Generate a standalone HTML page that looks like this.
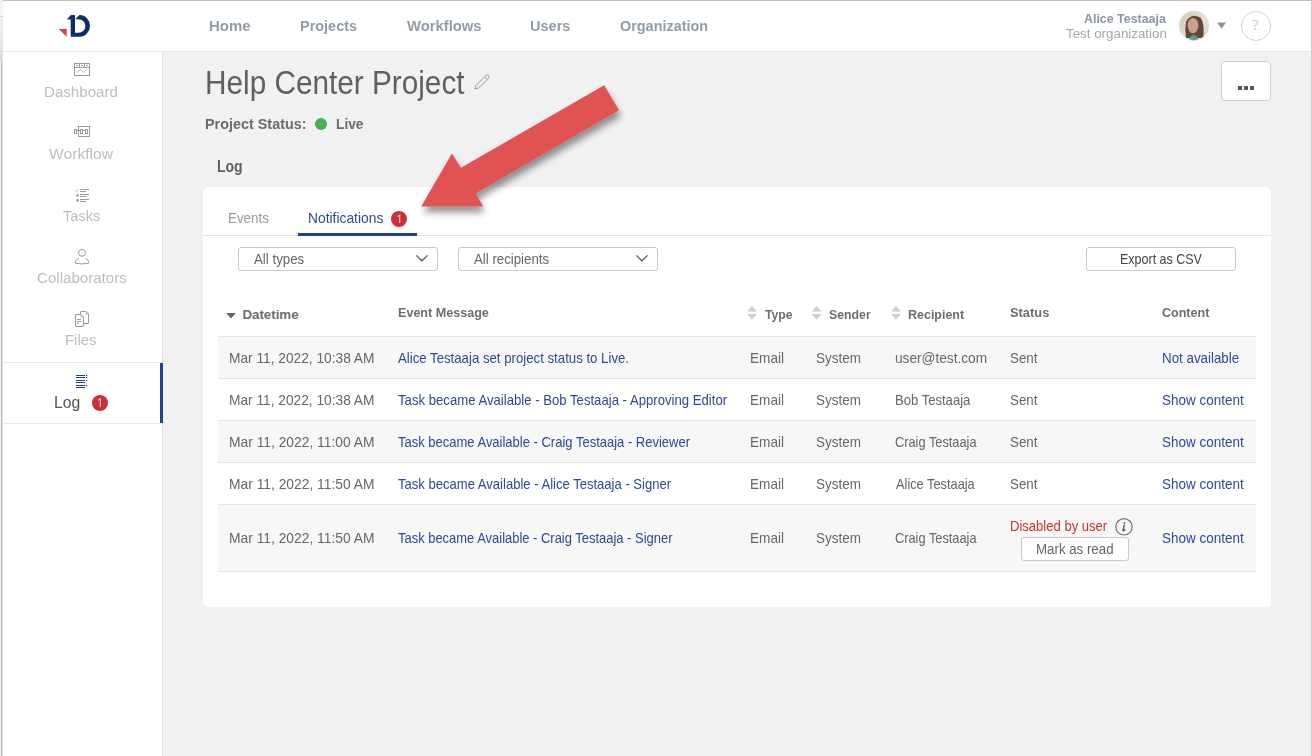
<!DOCTYPE html>
<html><head><meta charset="utf-8"><title>Help Center Project - Log</title>
<style>
html,body{margin:0;padding:0;}
body{width:1312px;height:756px;overflow:hidden;position:relative;background:#f1f1f1;font-family:"Liberation Sans",sans-serif;}
.t{position:absolute;white-space:nowrap;line-height:1;transform-origin:0 0;}
.b{position:absolute;box-sizing:border-box;}
svg{position:absolute;overflow:visible;}
</style></head><body>
<!-- left window strip -->
<div class="b" style="left:0;top:0;width:3px;height:756px;background:#f4f3f1;"></div>
<div class="b" style="left:0;top:16px;width:3px;height:1px;background:#cfcfcf;"></div>
<div class="b" style="left:0;top:17px;width:3px;height:45px;background:linear-gradient(#f2f2f1,#dcdcdc);"></div>
<div class="b" style="left:1px;top:62px;width:1px;height:694px;background:#bdbdbd;"></div>
<div class="b" style="left:2px;top:62px;width:1px;height:694px;background:#dedede;"></div>
<!-- header -->
<div class="b" style="left:3px;top:0;width:1309px;height:52px;background:#fff;border-bottom:1px solid #e8e8e8;"></div>
<div class="b" style="left:3px;top:0;width:1309px;height:1px;background:#c6beb8;"></div>
<!-- right window edge -->
<div class="b" style="left:1311px;top:0;width:1px;height:756px;background:#cfcfcf;"></div>
<!-- sidebar -->
<div class="b" style="left:3px;top:52px;width:160px;height:704px;background:#fff;border-right:1px solid #e3e3e3;"></div>
<div class="b" style="left:3px;top:362px;width:159px;height:1px;background:#e8e8e8;"></div>
<div class="b" style="left:3px;top:423px;width:159px;height:1px;background:#e8e8e8;"></div>
<div class="b" style="left:160px;top:363px;width:3px;height:60px;background:#26408f;"></div>
<!-- card -->
<div class="b" style="left:203px;top:187px;width:1068px;height:420px;background:#fff;border-radius:5px;"></div>
<div class="b" style="left:203px;top:235px;width:1068px;height:1px;background:#e3e3e3;"></div>
<div class="b" style="left:298px;top:233px;width:119px;height:3px;background:#26408f;"></div>
<!-- filters -->
<div class="b" style="left:238px;top:247px;width:200px;height:24px;border:1px solid #c9c9c9;border-radius:3px;background:#fff;"></div>
<div class="b" style="left:458px;top:247px;width:200px;height:24px;border:1px solid #c9c9c9;border-radius:3px;background:#fff;"></div>
<div class="b" style="left:1086px;top:247px;width:150px;height:24px;border:1px solid #c9c9c9;border-radius:3px;background:#fff;"></div>
<!-- table rows -->
<div class="b" style="left:218px;top:336px;width:1038px;height:1px;background:#e3e3e3;"></div>
<div class="b" style="left:218px;top:337px;width:1038px;height:41px;background:#f7f7f7;"></div>
<div class="b" style="left:218px;top:378px;width:1038px;height:1px;background:#e3e3e3;"></div>
<div class="b" style="left:218px;top:420px;width:1038px;height:1px;background:#e3e3e3;"></div>
<div class="b" style="left:218px;top:421px;width:1038px;height:41px;background:#f7f7f7;"></div>
<div class="b" style="left:218px;top:462px;width:1038px;height:1px;background:#e3e3e3;"></div>
<div class="b" style="left:218px;top:504px;width:1038px;height:1px;background:#e3e3e3;"></div>
<div class="b" style="left:218px;top:505px;width:1038px;height:66px;background:#f7f7f7;"></div>
<div class="b" style="left:218px;top:571px;width:1038px;height:1px;background:#e3e3e3;"></div>
<!-- ... button -->
<div class="b" style="left:1221px;top:61px;width:50px;height:40px;border:1px solid #cfcfcf;border-radius:4px;background:#fff;"></div>
<div class="b" style="left:1238px;top:86px;width:4px;height:4px;background:#555;"></div>
<div class="b" style="left:1244px;top:86px;width:4px;height:4px;background:#555;"></div>
<div class="b" style="left:1250px;top:86px;width:4px;height:4px;background:#555;"></div>
<!-- Mark as read button -->
<div class="b" style="left:1021px;top:537px;width:108px;height:24px;border:1px solid #c9c9c9;border-radius:3px;background:#fff;"></div>
<!-- badges -->
<div class="b" style="left:92px;top:395px;width:16px;height:16px;border-radius:50%;background:#c9303a;"></div>
<div class="b" style="left:391px;top:211px;width:16px;height:16px;border-radius:50%;background:#c9303a;"></div>
<!-- green dot -->
<div class="b" style="left:315px;top:117.5px;width:12px;height:12px;border-radius:50%;background:#47b04f;"></div>
<!-- help circle -->
<div class="b" style="left:1241px;top:11px;width:30px;height:30px;border-radius:50%;border:1px solid #d0d0d0;"></div>
<!-- avatar -->
<svg width="1312" height="756" viewBox="0 0 1312 756" style="left:0;top:0;">
<defs><filter id="avb"><feGaussianBlur stdDeviation="0.6"/></filter><clipPath id="avc"><circle cx="1194" cy="25.8" r="14.6"/></clipPath>
<linearGradient id="avbg" x1="0" y1="0" x2="1" y2="1"><stop offset="0" stop-color="#cfc6b6"/><stop offset="0.6" stop-color="#e6e0d4"/><stop offset="1" stop-color="#d6cebf"/></linearGradient></defs>
<g clip-path="url(#avc)">
<rect x="1179" y="11" width="30" height="30" fill="url(#avbg)"/>
<g filter="url(#avb)">
<path d="M1186,38 Q1184.5,30 1186,22 Q1189,16 1194.5,15.8 Q1200.5,16 1202.5,21.5 Q1204.5,29 1203,38 Z" fill="#604638"/>
<ellipse cx="1193" cy="25.6" rx="5.4" ry="7.6" fill="#c9a08b"/>
<path d="M1188.5,41 Q1189.5,35.5 1193.5,35 Q1197.5,35.5 1198.5,41 Z" fill="#5d9a8b"/>
</g>
</g>
<circle cx="1194" cy="25.8" r="14.8" fill="none" stroke="#d8d8d8" stroke-width="0.8"/>
</svg>
<div class="t" style="left:208.93px;top:18.00px;font-size:15.5px;font-weight:700;color:#929ca6;transform:scaleX(0.9647);">Home</div>
<div class="t" style="left:299.86px;top:18.00px;font-size:15.5px;font-weight:700;color:#929ca6;transform:scaleX(0.9325);">Projects</div>
<div class="t" style="left:407.00px;top:18.00px;font-size:15.5px;font-weight:700;color:#929ca6;transform:scaleX(0.9545);">Workflows</div>
<div class="t" style="left:529.93px;top:18.00px;font-size:15.5px;font-weight:700;color:#929ca6;transform:scaleX(0.9364);">Users</div>
<div class="t" style="left:619.92px;top:18.00px;font-size:15.5px;font-weight:700;color:#929ca6;transform:scaleX(0.9296);">Organization</div>
<div class="t" style="left:1084.49px;top:13.00px;font-size:12.2px;font-weight:700;color:#8b96a2;transform:scaleX(1.0177);">Alice Testaaja</div>
<div class="t" style="left:1066.43px;top:27.00px;font-size:13.4px;font-weight:400;color:#9ea7b0;transform:scaleX(0.9964);">Test organization</div>
<div class="t" style="left:44.44px;top:84.00px;font-size:15.5px;font-weight:400;color:#bdbdbd;transform:scaleX(0.9749);">Dashboard</div>
<div class="t" style="left:49.42px;top:146.00px;font-size:15.5px;font-weight:400;color:#bdbdbd;transform:scaleX(1.0095);">Workflow</div>
<div class="t" style="left:63.01px;top:208.00px;font-size:15.5px;font-weight:400;color:#bdbdbd;transform:scaleX(0.9394);">Tasks</div>
<div class="t" style="left:36.50px;top:270.00px;font-size:15.5px;font-weight:400;color:#bdbdbd;transform:scaleX(0.9735);">Collaborators</div>
<div class="t" style="left:65.46px;top:332.00px;font-size:15.5px;font-weight:400;color:#bdbdbd;transform:scaleX(0.9605);">Files</div>
<div class="t" style="left:53.74px;top:395.00px;font-size:15.7px;font-weight:400;color:#555;transform:scaleX(1.0057);">Log</div>
<div class="t" style="left:205.32px;top:67.00px;font-size:32.3px;font-weight:400;color:#606060;transform:scaleX(0.9209);">Help Center Project</div>
<div class="t" style="left:205.46px;top:116.00px;font-size:15.5px;font-weight:700;color:#6c6c6c;transform:scaleX(0.9282);">Project Status:</div>
<div class="t" style="left:335.81px;top:116.00px;font-size:15.5px;font-weight:700;color:#6c6c6c;transform:scaleX(0.8862);">Live</div>
<div class="t" style="left:217.49px;top:159.00px;font-size:16px;font-weight:700;color:#5e5e5e;transform:scaleX(0.8750);">Log</div>
<div class="t" style="left:228.13px;top:210.00px;font-size:15px;font-weight:400;color:#999;transform:scaleX(0.8912);">Events</div>
<div class="t" style="left:307.69px;top:210.00px;font-size:15px;font-weight:400;color:#2f4899;transform:scaleX(0.9218);">Notifications</div>
<div class="t" style="left:254.30px;top:252.00px;font-size:14.5px;font-weight:400;color:#666;transform:scaleX(0.9171);">All types</div>
<div class="t" style="left:474.30px;top:252.00px;font-size:14.5px;font-weight:400;color:#666;transform:scaleX(0.9130);">All recipients</div>
<div class="t" style="left:1119.50px;top:251.00px;font-size:15px;font-weight:400;color:#444;transform:scaleX(0.8326);">Export as CSV</div>
<div class="t" style="left:242.43px;top:308.00px;font-size:13.3px;font-weight:700;color:#6e6e6e;">Datetime</div>
<div class="t" style="left:397.68px;top:306.00px;font-size:13.3px;font-weight:700;color:#6e6e6e;transform:scaleX(0.9455);">Event Message</div>
<div class="t" style="left:764.68px;top:308.00px;font-size:13.3px;font-weight:700;color:#6e6e6e;transform:scaleX(0.9199);">Type</div>
<div class="t" style="left:829.23px;top:308.00px;font-size:13.3px;font-weight:700;color:#6e6e6e;transform:scaleX(0.9261);">Sender</div>
<div class="t" style="left:907.99px;top:308.00px;font-size:13.3px;font-weight:700;color:#6e6e6e;transform:scaleX(0.9379);">Recipient</div>
<div class="t" style="left:1010.21px;top:306.00px;font-size:13.3px;font-weight:700;color:#6e6e6e;transform:scaleX(0.9672);">Status</div>
<div class="t" style="left:1162.40px;top:306.00px;font-size:13.3px;font-weight:700;color:#6e6e6e;transform:scaleX(0.9426);">Content</div>
<div class="t" style="left:229.10px;top:351.00px;font-size:14.5px;font-weight:400;color:#666;transform:scaleX(0.9464);">Mar 11, 2022, 10:38 AM</div>
<div class="t" style="left:398.10px;top:351.00px;font-size:14.5px;font-weight:400;color:#2f4899;transform:scaleX(0.9108);">Alice Testaaja set project status to Live.</div>
<div class="t" style="left:750.41px;top:351.00px;font-size:14.5px;font-weight:400;color:#666;transform:scaleX(0.9371);">Email</div>
<div class="t" style="left:816.29px;top:351.00px;font-size:14.5px;font-weight:400;color:#666;transform:scaleX(0.9281);">System</div>
<div class="t" style="left:894.91px;top:351.00px;font-size:14.5px;font-weight:400;color:#666;transform:scaleX(0.9421);">user@test.com</div>
<div class="t" style="left:1010.00px;top:351.00px;font-size:14.5px;font-weight:400;color:#666;transform:scaleX(0.9184);">Sent</div>
<div class="t" style="left:1161.83px;top:351.00px;font-size:14.5px;font-weight:400;color:#2f4899;transform:scaleX(0.9208);">Not available</div>
<div class="t" style="left:229.10px;top:393.00px;font-size:14.5px;font-weight:400;color:#666;transform:scaleX(0.9464);">Mar 11, 2022, 10:38 AM</div>
<div class="t" style="left:397.84px;top:393.00px;font-size:14.5px;font-weight:400;color:#2f4899;transform:scaleX(0.9067);">Task became Available - Bob Testaaja - Approving Editor</div>
<div class="t" style="left:750.41px;top:393.00px;font-size:14.5px;font-weight:400;color:#666;transform:scaleX(0.9371);">Email</div>
<div class="t" style="left:816.29px;top:393.00px;font-size:14.5px;font-weight:400;color:#666;transform:scaleX(0.9281);">System</div>
<div class="t" style="left:894.75px;top:393.00px;font-size:14.5px;font-weight:400;color:#666;transform:scaleX(0.9013);">Bob Testaaja</div>
<div class="t" style="left:1010.00px;top:393.00px;font-size:14.5px;font-weight:400;color:#666;transform:scaleX(0.9184);">Sent</div>
<div class="t" style="left:1162.29px;top:393.00px;font-size:14.5px;font-weight:400;color:#2f4899;transform:scaleX(0.9291);">Show content</div>
<div class="t" style="left:229.09px;top:435.00px;font-size:14.5px;font-weight:400;color:#666;transform:scaleX(0.9533);">Mar 11, 2022, 11:00 AM</div>
<div class="t" style="left:397.84px;top:435.00px;font-size:14.5px;font-weight:400;color:#2f4899;transform:scaleX(0.8961);">Task became Available - Craig Testaaja - Reviewer</div>
<div class="t" style="left:750.41px;top:435.00px;font-size:14.5px;font-weight:400;color:#666;transform:scaleX(0.9371);">Email</div>
<div class="t" style="left:816.29px;top:435.00px;font-size:14.5px;font-weight:400;color:#666;transform:scaleX(0.9281);">System</div>
<div class="t" style="left:895.16px;top:435.00px;font-size:14.5px;font-weight:400;color:#666;transform:scaleX(0.8821);">Craig Testaaja</div>
<div class="t" style="left:1010.00px;top:435.00px;font-size:14.5px;font-weight:400;color:#666;transform:scaleX(0.9184);">Sent</div>
<div class="t" style="left:1162.29px;top:435.00px;font-size:14.5px;font-weight:400;color:#2f4899;transform:scaleX(0.9291);">Show content</div>
<div class="t" style="left:229.09px;top:477.00px;font-size:14.5px;font-weight:400;color:#666;transform:scaleX(0.9533);">Mar 11, 2022, 11:50 AM</div>
<div class="t" style="left:397.84px;top:477.00px;font-size:14.5px;font-weight:400;color:#2f4899;transform:scaleX(0.9004);">Task became Available - Alice Testaaja - Signer</div>
<div class="t" style="left:750.41px;top:477.00px;font-size:14.5px;font-weight:400;color:#666;transform:scaleX(0.9371);">Email</div>
<div class="t" style="left:816.29px;top:477.00px;font-size:14.5px;font-weight:400;color:#666;transform:scaleX(0.9281);">System</div>
<div class="t" style="left:895.80px;top:477.00px;font-size:14.5px;font-weight:400;color:#666;transform:scaleX(0.8825);">Alice Testaaja</div>
<div class="t" style="left:1010.00px;top:477.00px;font-size:14.5px;font-weight:400;color:#666;transform:scaleX(0.9184);">Sent</div>
<div class="t" style="left:1162.29px;top:477.00px;font-size:14.5px;font-weight:400;color:#2f4899;transform:scaleX(0.9291);">Show content</div>
<div class="t" style="left:229.09px;top:531.00px;font-size:14.5px;font-weight:400;color:#666;transform:scaleX(0.9533);">Mar 11, 2022, 11:50 AM</div>
<div class="t" style="left:397.84px;top:531.00px;font-size:14.5px;font-weight:400;color:#2f4899;transform:scaleX(0.8930);">Task became Available - Craig Testaaja - Signer</div>
<div class="t" style="left:750.41px;top:531.00px;font-size:14.5px;font-weight:400;color:#666;transform:scaleX(0.9371);">Email</div>
<div class="t" style="left:816.29px;top:531.00px;font-size:14.5px;font-weight:400;color:#666;transform:scaleX(0.9281);">System</div>
<div class="t" style="left:895.16px;top:531.00px;font-size:14.5px;font-weight:400;color:#666;transform:scaleX(0.8821);">Craig Testaaja</div>
<div class="t" style="left:1162.29px;top:531.00px;font-size:14.5px;font-weight:400;color:#2f4899;transform:scaleX(0.9291);">Show content</div>
<div class="t" style="left:1009.96px;top:519.00px;font-size:14px;font-weight:400;color:#cc3333;transform:scaleX(0.9320);">Disabled by user</div>
<div class="t" style="left:1035.74px;top:543.00px;font-size:13.8px;font-weight:400;color:#666;transform:scaleX(0.9628);">Mark as read</div>
<svg width="1312" height="756" viewBox="0 0 1312 756" style="left:0;top:0;">
<!-- logo -->
<path d="M66.9,19.4 L70.9,15.1 L75,15.1 L75,36.8 L70.7,36.8 L70.7,19.4 Z" fill="#0f2d62"/>
<path d="M75.6,18.8 L79.5,15.1 L79.6,15.1 A10.4,10.85 0 0 1 79.6,36.8 L75,36.8 L75,32.8 L78.6,32.8 A6.8,6.8 0 0 0 78.6,19.2 L75.6,19.2 Z" fill="#0f2d62"/>
<path d="M58.8,29 L66.7,29 L66.7,36.8 Z" fill="#e8335a"/>
<!-- dashboard icon -->
<g fill="none" stroke="#9a9a9a" stroke-width="1">
<rect x="74.5" y="63.5" width="15" height="12"/>
<path d="M74.5,67.5 H89.5 M79.5,63.5 V67.5 M84.5,63.5 V67.5"/>
<path d="M76,65.5 H78 M81,65.5 H83 M86,65.5 H88"/>
<path d="M77,72.6 L80.4,69.3 L83.5,72.6 L86.7,69.3" stroke="#b0b0b0" stroke-width="0.9"/>
<!-- workflow icon -->
<rect x="78.5" y="126.5" width="11" height="10"/>
<rect x="74.5" y="129.5" width="2" height="4"/>
<rect x="80.5" y="129.5" width="2" height="4"/>
<rect x="85.5" y="129.5" width="2" height="4"/>
<path d="M76.5,130.5 H80.5 M82.5,130.5 H85.5"/>
<!-- tasks icon -->
<path d="M75.2,190.3 L76.4,191.6 L78.6,189.2" stroke="#aaa" stroke-width="0.8"/>
<path d="M80,189.5 H89 M80,191.5 H86 M80,194.5 H89 M80,196.5 H86 M80,199.5 H89 M80,201.5 H86"/>
<circle cx="77.5" cy="195.5" r="1.3" fill="#9a9a9a" stroke="none"/><circle cx="77.5" cy="200.4" r="1.3" fill="#9a9a9a" stroke="none"/>
<!-- collaborators -->
<circle cx="82" cy="252.8" r="3.5"/>
<path d="M78.7,258.3 Q75.5,259.5 75.5,261.5 L75.5,263.3 Q82,264.6 88.5,263.3 L88.5,261.5 Q88.5,259.5 85.4,258.3"/>
<!-- files -->
<path d="M75.5,315 Q75.5,314.5 76,314.5 L81,314.5 L83.5,317 L83.5,326 Q83.5,326.5 83,326.5 L76,326.5 Q75.5,326.5 75.5,326 Z"/>
<path d="M80.5,314 L80.5,312 Q80.5,311.5 81,311.5 L86,311.5 L88.5,314 L88.5,323 Q88.5,323.5 88,323.5 L83.5,323.5"/>
<path d="M77,319.5 H81 M77,321.5 H81 M77,323.5 H79" />
<path d="M81,315.5 L81,317 L82.5,317 M86,312.5 L86,314 L87.5,314" stroke-width="0.8"/>
</g>
<circle cx="82" cy="252.8" r="0" fill="none"/>
<!-- log icon -->
<g stroke="#26408f" stroke-width="1.1" fill="none">
<path d="M76,375.5 H85 M76,377.5 H85 M76,380.5 H85 M76,382.5 H85 M76,385.5 H85 M76,387.5 H85"/>
</g>
<g fill="#26408f"><rect x="86" y="375" width="1.2" height="1.2"/><rect x="86" y="377" width="1.2" height="1.2"/><rect x="86" y="380" width="1.2" height="1.2"/><rect x="86" y="385" width="1.2" height="1.2"/></g>
<!-- pencil -->
<path d="M474.9,88.9 L476,85.3 L485.8,75.5 Q487.2,74.3 488.5,75.6 Q489.8,77 488.6,78.3 L478.6,88 Z M484.6,76.8 L487.3,79.5" fill="none" stroke="#9a9a9a" stroke-width="1"/>
<!-- caret -->
<path d="M1217,22.6 L1226,22.6 L1221.5,28.8 Z" fill="#8b96a2"/>
<!-- sort icons -->
<path d="M226,313.1 L235.9,313.1 L231,318.6 Z" fill="#666"/>
<g fill="#cfcfcf">
<path d="M747.1,311.6 L757,311.6 L751.9,306.1 Z M747.1,314.1 L757,314.1 L751.9,319.8 Z"/>
<path d="M811.8,311.6 L821.7,311.6 L816.6,306.1 Z M811.8,314.1 L821.7,314.1 L816.6,319.8 Z"/>
<path d="M891.1,311.6 L901,311.6 L895.9,306.1 Z M891.1,314.1 L901,314.1 L895.9,319.8 Z"/>
</g>
<!-- chevrons -->
<path d="M416.3,255.4 L421.9,260.8 L427.6,255.4 M636.3,255.4 L641.9,260.8 L647.6,255.4" fill="none" stroke="#555" stroke-width="1.2"/>
<!-- info icon -->
<circle cx="1124" cy="526.8" r="8.2" fill="none" stroke="#707070" stroke-width="1.2"/>
<circle cx="1124.5" cy="523" r="0.9" fill="#555"/>
<path d="M1124.3,525.2 L1123,530.2 Q1122.8,531 1123.6,530.6 L1125,529.6" fill="none" stroke="#555" stroke-width="1.3" stroke-linecap="round"/>
<!-- badge ones -->
<path d="M98,400.4 L100.3,398.8 L100.3,407" fill="none" stroke="#f3d6d6" stroke-width="1.1"/>
<path d="M397.4,216.6 L399.7,215 L399.7,223" fill="none" stroke="#f3d6d6" stroke-width="1.1"/>
</svg>
<!-- help ? -->
<div class="t" style="left:1252px;top:18px;font-family:'Liberation Serif',serif;font-size:15px;color:#c8c8c8;line-height:1;">?</div>
<!-- arrow -->
<svg width="1312" height="756" viewBox="0 0 1312 756" style="left:0;top:0;">
<defs><filter id="sh" x="-20%" y="-20%" width="140%" height="140%"><feGaussianBlur in="SourceAlpha" stdDeviation="3.8"/><feOffset dx="2" dy="6"/><feComponentTransfer><feFuncA type="linear" slope="0.42"/></feComponentTransfer><feMerge><feMergeNode/><feMergeNode in="SourceGraphic"/></feMerge></filter></defs>
<polygon points="604.2,85.2 619,110.2 475.8,193.4 483,206.5 421.2,206.5 451.9,153.6 461,167.8" fill="#e15252" filter="url(#sh)"/>
</svg>

</body></html>
